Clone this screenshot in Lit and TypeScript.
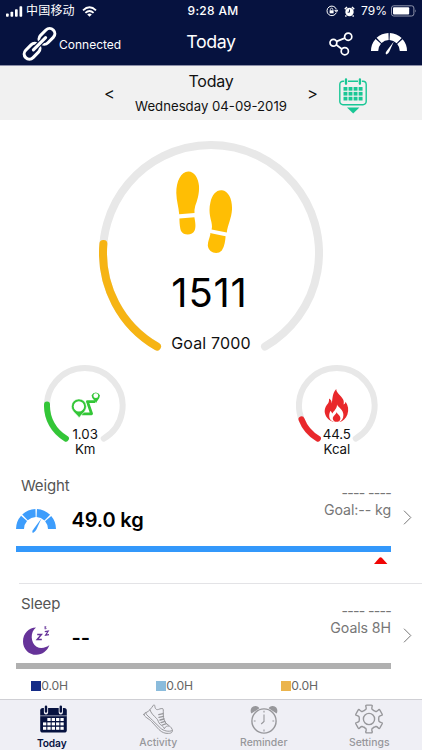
import { LitElement, html, css, svg } from "lit";
import { customElement, property } from "lit/decorators.js";

const polar = (c: number, r: number, deg: number) => {
  const a = (deg * Math.PI) / 180;
  return `${(c + r * Math.cos(a)).toFixed(2)} ${(c + r * Math.sin(a)).toFixed(2)}`;
};

const arc = (c: number, r: number, sweep: number) =>
  `M${polar(c, r, 120)}A${r} ${r} 0 ${sweep > 180 ? 1 : 0} 1 ${polar(c, r, 120 + sweep)}`;

@customElement("progress-ring")
class ProgressRing extends LitElement {
  @property({ type: Number }) size = 224;
  @property({ type: Number }) thickness = 8;
  @property({ type: Number }) sweep = 0;
  @property() color = "#f6b414";

  static styles = css`
    :host { display: grid; }
    svg, .content { grid-area: 1 / 1; }
    svg { display: block; }
    .content { display: flex; flex-direction: column; align-items: center; }
  `;

  render() {
    const c = this.size / 2;
    const r = c - this.thickness / 2;
    return html`
      <svg width=${this.size} height=${this.size} fill="none" stroke-linecap="round" stroke-width=${this.thickness}>
        <path d=${arc(c, r, 300)} stroke="#e8e8e8" />
        <path d=${arc(c, r, this.sweep)} stroke=${this.color} />
      </svg>
      <div class="content"><slot></slot></div>
    `;
  }
}

@customElement("gauge-icon")
class GaugeIcon extends LitElement {
  static styles = css`
    :host { display: block; }
    svg { display: block; width: 100%; height: 100%; }
  `;
  render() {
    return html`<svg viewBox="0 0 40 25" fill="none">
      <path d="M4 21a16 16 0 0 1 32 0" stroke="currentColor" stroke-width="8" stroke-dasharray="11.6 1.29" />
      <path d="M25.4 10.6L20.4 21.6Q19.6 23.6 17 25Q16 24.5 16.4 22.8Q17.2 21.6 18 20.4Z" fill="currentColor" />
    </svg>`;
  }
}

const cells = (cols: number, x0: number, y0: number, w: number, h: number, dx: number, dy: number, skip: number) =>
  [0, 1, 2].map((row) =>
    Array.from({ length: cols }, (_, i) => i)
      .slice(row === 0 ? skip : 0)
      .map((col) => svg`<rect x=${x0 + col * dx} y=${y0 + row * dy} width=${w} height=${h} />`)
  );

const gearPath = (() => {
  const at = (deg: number, r: number) => polar(15, r, deg);
  let d = `M${at(-90 - 14, 13)}`;
  for (let i = 0; i < 6; i++) {
    const b = i * 60 - 90;
    d += `Q${at(b - 14.5, 14.2)} ${at(b - 9, 14)}L${at(b + 9, 14)}Q${at(b + 14.5, 14.2)} ${at(b + 14, 13)}`;
    d += `Q${at(b + 13, 9.6)} ${at(b + 24, 9.9)}Q${at(b + 30, 9.3)} ${at(b + 36, 9.9)}Q${at(b + 47, 9.6)} ${at(b + 46, 13)}`;
  }
  return d + "Z";
})();

const tabs = [
  {
    label: "Today",
    cls: "today",
    icon: svg`
      <rect x="2.2" y="4" width="26.6" height="24.6" rx="2.6" fill="#06123f" />
      <path d="M8 3.4v5M22.8 3.4v5" stroke="#efeff5" stroke-width="4.2" stroke-linecap="round" />
      <path d="M8 2.6v5M22.8 2.6v5" stroke="#06123f" stroke-width="2.4" stroke-linecap="round" />
      <path d="M2.2 11.8h26.6" stroke="#efeff5" stroke-width=".6" />
      <g fill="#fff">${cells(5, 5, 14, 3.3, 3, 4.35, 4.4, 1)}</g>`,
  },
  {
    label: "Activity",
    cls: "activity",
    icon: svg`<g fill="none" stroke="#97979b" stroke-width="1" stroke-linejoin="round" stroke-linecap="round">
      <path d="M.9 10.4C1 9.4 1.8 9 3 8.6C6 7.6 8.4 4 10.4 1.2C11 .6 11.6.9 11.8 1.8C12 4.4 13 6.3 15.6 5.4C17.4 4.6 19 4.3 20 4.8C20.6 5.6 20.1 8.4 20.3 11C20.6 14.6 21 17.4 23.4 19.6C25.6 21.4 28.4 23 29.3 25.6C30 28.2 28.2 29.4 25.4 29.4C22.2 29.6 19 28.6 16 25.6L8.4 17.4C6 14.6 1.2 13.2 .9 10.4Z" />
      <path d="M2.6 8.9C3 11 6.4 13 9.6 16.4L17.6 24.2C20.4 26.8 25.6 28.2 29.2 26.6M7 5.8C7.8 9 10.6 11.6 13.4 14.2C15.4 16 15 18.4 17.2 20.4C18.6 21.6 20.4 22.4 21.4 24.4M21.4 24.4C22.6 22.4 24 21.8 25.6 22" />
      <path d="M15.8 10.6l4.3-.9M16 13.3l4.5-.9M17 16l4-1M18 18.6l4-1.2M19.4 21l4-1.4" stroke-width="1.3" />
    </g>`,
  },
  {
    label: "Reminder",
    cls: "",
    icon: svg`
      <path d="M2.4 9.6C.6 6.6 2 2.2 6.2 2.1C8.4 2 9.8 3.2 10.4 4.3ZM27.6 9.6C29.4 6.6 28 2.2 23.8 2.1C21.6 2 20.2 3.2 19.6 4.3Z" fill="#97979b" />
      <circle cx="15" cy="17" r="12.1" fill="#efeff5" stroke="#97979b" stroke-width="1.4" />
      <path d="M15 10.4V17.4L12.2 20M15 6.7v1.8M15 25.6v1.8M4.8 17h1.8M23.4 17h1.8" fill="none" stroke="#97979b" stroke-width="1.1" />`,
  },
  {
    label: "Settings",
    cls: "",
    icon: svg`<g fill="none" stroke="#97979b" stroke-width="1.4" stroke-linejoin="round">
      <path d=${gearPath} /><circle cx="15" cy="15" r="5.6" /></g>`,
  },
];

const chevron = html`<svg class="chevron" width="9" height="15" viewBox="0 0 9 15" fill="none" stroke="#777" stroke-width="1"><path d="M1 .7L7.8 7.5L1 14.3" /></svg>`;

@customElement("app-root")
class AppRoot extends LitElement {
  static styles = css`
    :host {
      display: flex; flex-direction: column; width: 422px; height: 750px; overflow: hidden;
      background: #fff; color: #111; white-space: nowrap;
      font-family: Inter, "Noto Sans CJK SC", sans-serif;
    }
    * { box-sizing: border-box; }
    svg { display: block; flex: none; }
    header { height: 66px; background: #06123f; color: #fff; border-bottom: 1px solid #8c8fa8; flex: none; }
    .status { height: 22px; display: grid; grid-template-columns: 1fr auto 1fr; align-items: center; font-size: 12px; line-height: 22px; }
    .left { display: flex; align-items: center; padding-left: 6px; }
    .carrier { margin: 0 7px 0 3px; font-size: 12px; letter-spacing: .2px; }
    .clock { font-weight: 500; letter-spacing: .3px; padding-left: 4px; }
    .right { display: flex; align-items: center; justify-content: flex-end; padding-right: 5px; }
    .percent { margin: 0 4px 0 6px; }
    .lock { margin-right: 6px; }
    .nav { height: 43px; display: grid; grid-template-columns: 1fr auto 1fr; align-items: center; }
    .device { display: flex; align-items: center; padding-left: 22px; }
    .device span { font-size: 12px; margin: 1px 0 0 2px; letter-spacing: 0; }
    .title { font-size: 17.8px; margin-top: -4px; letter-spacing: -.4px; }
    .actions { display: flex; justify-content: flex-end; align-items: center; padding-right: 15px; gap: 18.5px; }
    .actions gauge-icon { width: 36px; height: 22.5px; }
    .strip { height: 54px; flex: none; background: #f1f1f1; display: flex; align-items: center; padding-left: 104px; }
    .arrow { width: 11px; font-size: 16.5px; line-height: 20px; text-align: center; margin-top: 0; }
    .date { width: 192px; text-align: center; }
    .day { font-size: 16px; line-height: 26px; margin-top: -1px; letter-spacing: -.25px; }
    .full { font-size: 13.2px; line-height: 24px; letter-spacing: 0; }
    .strip svg { margin: 6px 0 0 20.8px; }
    .rings { height: 346px; flex: none; }
    .main { display: flex; justify-content: center; padding-top: 20.7px; height: 244px; }
    .feet { margin: 30px 14px 0 0; }
    .steps { font-size: 40px; line-height: 48px; margin-top: 14px; padding-right: 3px; letter-spacing: .8px; color: #000; }
    .goal { font-size: 16px; line-height: 20px; margin-top: 16px; letter-spacing: .15px; }
    .minor { display: flex; justify-content: space-between; padding: 0 44.4px; margin-top: .5px; height: 95px; }
    .value { font-size: 13.3px; line-height: 15.5px; text-align: center; color: #111; margin-top: 9px; }
    .route { margin-top: 26px; }
    .flame { margin-top: 24px; }
    .flame + .value { margin-top: 5px; letter-spacing: -.1px; }
    .metric { height: 115px; flex: none; padding: 10px 0 0 16px; }
    .metric.weight { height: 118px; border-bottom: 1px solid #e3e3e6; border-image: linear-gradient(90deg, transparent 20px, #e3e3e6 20px) 1; }
    .name { font-size: 15px; line-height: 20px; padding-left: 5px; color: #555; letter-spacing: -.15px; }
    .weight .name { padding-top: .4px; }
    .row { display: flex; height: 50px; }
    .weight .row { height: 49.6px; }
    .pic { width: 40px; margin-right: 15.5px; padding-top: 11.5px; }
    .pic gauge-icon { width: 40px; height: 25px; color: #3d9dfc; }
    .amount { width: 150px; font-size: 20px; font-weight: 600; line-height: 49px; color: #000; letter-spacing: -.15px; }
    .target { width: 169.5px; text-align: right; font-size: 14.2px; line-height: 17px; color: #777; margin-top: -20px; height: 50px; letter-spacing: -.1px; }
    .target div { height: 17px; }
    .target .none { margin-top: 8px; letter-spacing: -.75px; }
    .chevron { margin: 13.5px 0 0 11.5px; }
    .bar { width: 375px; height: 6px; background: #3398fb; }
    .sleep .row { height: 49px; }
    .sleep .bar { background: #b0b0b0; }
    .marker { margin: 5px 0 0 358px; }
    .legend { display: flex; padding: 7px 0 0 15px; font-size: 12.2px; line-height: 20px; color: #666; letter-spacing: -.15px; }
    .legend div { display: flex; align-items: center; width: 125px; }
    .swatch { width: 10px; height: 10px; margin-right: .3px; }
    .navy { background: #152c87; } .sky { background: #8bbcdc; } .gold { background: #ebb44d; }
    nav { flex: 1; background: #efeff5; border-top: 1px solid #cfcfd4; display: grid; grid-template-columns: repeat(4, 105.5px); }
    .tab { display: flex; flex-direction: column; align-items: center; padding-top: 4px; font-size: 10.4px; font-weight: 500; color: #97979b; line-height: 14px; letter-spacing: 0; }
    .tab span { margin-top: 2px; }
    .tab.today { color: #06123f; font-weight: 600; font-size: 10.2px; letter-spacing: -.1px; }
    .tab.today span { padding-right: 2px; }
  `;

  private header() {
    return html`<header>
      <div class="status">
        <div class="left">
          <svg width="17" height="11" viewBox="0 0 17 11" fill="#fff"><rect y="7.5" width="2.7" height="3.2" rx=".7" /><rect x="4.5" y="5.7" width="2.7" height="5" rx=".7" /><rect x="9" y="3.3" width="2.7" height="7.4" rx=".7" /><rect x="13.5" y=".3" width="2.7" height="10.4" rx=".7" /></svg>
          <span class="carrier">中国移动</span>
          <svg width="15" height="11" viewBox="0 0 15 11" fill="none" stroke="#fff" stroke-width="1.8"><path d="M1 4.4Q7.5-1.8 14 4.4M3.4 6.9Q7.5 3 11.6 6.9" /><path d="M7.5 10.8L5.2 8.5Q7.5 6.6 9.8 8.5Z" fill="#fff" stroke="none" /></svg>
        </div>
        <span class="clock">9:28 AM</span>
        <div class="right">
          <svg class="lock" width="12" height="12" viewBox="0 0 12 12" fill="none" stroke="#fff" stroke-width="1"><path d="M10.2 7.8A4.8 4.8 0 1 1 10.3 4.2M8.8 5.3h3L10.4 7.2Z" /><rect x="3.6" y="5.3" width="4" height="3" fill="#fff" stroke="none" /><path d="M4.4 5.4V4.4a1.2 1.2 0 0 1 2.4 0v1" stroke-width=".8" /></svg>
          <svg width="11" height="11" viewBox="0 0 11 11"><circle cx="5.5" cy="6" r="4.2" fill="#fff" /><path d="M.8 3.2L3 1M10.2 3.2L8 1M2.4 9.5l-1 1M8.6 9.5l1 1" stroke="#fff" stroke-width="1.5" /><path d="M5.5 3.5V6.2H3.7" fill="none" stroke="#06123f" stroke-width=".9" /></svg>
          <span class="percent">79%</span>
          <svg width="26" height="12" viewBox="0 0 26 12"><rect x=".5" y=".8" width="22.4" height="10.2" rx="2.2" fill="none" stroke="#9196ad" /><rect x="2" y="2.2" width="16.2" height="7.4" rx="1" fill="#fff" /><path d="M24.1 4.2Q25.6 5.9 24.1 7.6Z" fill="#9196ad" /></svg>
        </div>
      </div>
      <div class="nav">
        <div class="device">
          <svg width="35" height="36" viewBox="0 0 35 36" fill="none" stroke="#fff"><g transform="rotate(-45 17.5 17.8)" stroke-width="3.1"><rect x="-2" y="12.6" width="18" height="10.4" rx="5.2" /><rect x="19" y="12.6" width="18" height="10.4" rx="5.2" /></g><path d="M11.6 23.7L23.4 11.9" stroke="#06123f" stroke-width="5.4" stroke-linecap="round" /><path d="M11.4 23.9L23.6 11.7" stroke-width="3.1" stroke-linecap="round" /></svg>
          <span>Connected</span>
        </div>
        <div class="title">Today</div>
        <div class="actions">
          <svg width="24" height="24" viewBox="0 0 24 24" fill="none" stroke="#fff" stroke-width="1.7"><circle cx="4.4" cy="10.7" r="3.4" /><circle cx="19.2" cy="4.7" r="3.6" /><circle cx="15.8" cy="19.2" r="3.6" /><path d="M7.6 9.4L15.8 6.1M7.2 12.8L12.8 17" /></svg>
          <gauge-icon></gauge-icon>
        </div>
      </div>
    </header>`;
  }

  private strip() {
    return html`<div class="strip">
      <div class="arrow">&lt;</div>
      <div class="date"><div class="day">Today</div><div class="full">Wednesday 04-09-2019</div></div>
      <div class="arrow">&gt;</div>
      <svg width="28" height="36" viewBox="0 0 28 36" fill="none" stroke="#19c795"><path d="M5.2 3.2H4.2A3.2 3.2 0 0 0 .8 6.4V23.6A3.2 3.2 0 0 0 4 26.8H24A3.2 3.2 0 0 0 27.2 23.6V6.4A3.2 3.2 0 0 0 24 3.2H22.8M9 3.2H19" stroke-width="1.4" /><path d="M7 1.3V5.8M20.9 1.3V5.8" stroke-width="2.3" stroke-linecap="round" /><g fill="#19c795" stroke="none">${cells(4, 4.5, 9, 3.9, 3.7, 5.05, 4.9, 0)}<path d="M8 29.6H20.4L14.2 35.6Z" /></g></svg>
    </div>`;
  }

  private rings() {
    return html`<div class="rings">
      <div class="main">
        <progress-ring .size=${224} .thickness=${8} .sweep=${64.8} color="#f6b414">
          <svg class="feet" width="58" height="84" viewBox="0 0 58 84" fill="#ffbe04">
            <path d="M13.3 .4C19 .2 23.5 7 24 15C24.5 23 22 30 20.2 35Q19.2 39 19.5 42L4.2 43.2C3.8 36.5 1.4 30 1.3 22C1.2 10 6 .8 13.3 .4ZM4.4 47.4L19.4 46.3C20.2 51 21.2 56 19.6 59.6C17.6 64.6 8.6 65 6 60Q4.6 56.4 4.4 47.4Z" />
            <path d="M47 19.3C53.5 20 57.5 28.5 57 38.5C56.6 47 52.6 54 51.8 61.6L36.6 58.6C37.2 56 37 54 36.4 51C34.5 44 33.8 38.5 35.4 31.5C37 23.5 41.5 18.7 47 19.3ZM35.4 63Q34.8 61.8 36 62.2L50.6 65.2C50.2 69.5 49.8 75 46.8 79.4C42 84.6 33.2 81 32.8 74.4C32.8 70.5 34.6 67 35.4 63Z" />
          </svg>
          <div class="steps">1511</div>
          <div class="goal">Goal 7000</div>
        </progress-ring>
      </div>
      <div class="minor">
        <progress-ring .size=${81.6} .thickness=${6} .sweep=${62} color="#33c637">
          <svg class="route" width="30" height="27" viewBox="0 0 30 27" fill="none" stroke="#33c637"><path d="M25 10H18.6L22.6 21.6V24.4H12" stroke-width="0" /><path d="M25 10.6H17.4L21.6 22.8H12" stroke-width="2.8" stroke-linejoin="round" /><path d="M9.2 27C7.5 23.4 1.4 20.6 1.4 15.4A7.5 7.5 0 0 1 16.4 15.4C16.4 20.6 10.9 23.4 9.2 27Z" fill="#33c637" stroke="#fff" stroke-width=".6" /><circle cx="8.9" cy="15.4" r="5.2" fill="#fff" stroke="none" /><path d="M26 10.6C25.2 8.8 22.3 7.2 22.3 4.5A3.8 3.8 0 0 1 29.2 4.5C29.2 7.2 26.8 8.8 26 10.6Z" fill="#33c637" stroke-width="1.4" /><circle cx="25.8" cy="4.7" r="2.4" fill="#fff" stroke="none" /></svg>
          <div class="value">1.03<br />Km</div>
        </progress-ring>
        <progress-ring .size=${81.6} .thickness=${6} .sweep=${39} color="#e9282b">
          <svg class="flame" width="25" height="33" viewBox="0 0 25 33"><path d="M12.2 0C12.6 4 15.5 5.3 18 8.7C20 11 20 12.6 19.6 15.6C20.8 15 21.4 14 21.6 12.8C24.2 16.5 25 21 23.4 25.4C22 29.4 18.8 32.2 15.4 33H9.8C5.6 32 2 28.8 1 24.6C0 20 2 17 3.8 14.8C4.8 13.4 5.2 12 5 9.6C7 10.6 7.8 12.4 7.6 14.4C8.8 12 7.6 5 12.2 0Z" fill="#e9282b" /><path d="M13 15.4C13.8 18 19.6 20.4 19.4 26C19.4 29.6 17.6 32 15.2 33H9.8C7 32 5.2 29.8 5.2 27C5.2 24.6 5.8 23 6.6 21.8C7.4 22.8 7.8 23.8 8.4 24.6C9.6 21.6 13.2 19.8 13 15.4Z" fill="#fff" /><path d="M12.7 23C12.9 25 16.4 26.2 16.4 29.2C16.4 31.8 14.6 32.8 12.6 32.8C10.4 32.8 8.8 31.4 8.8 29.4C8.8 26.6 12 26 12.7 23Z" fill="#e9282b" /></svg>
          <div class="value">44.5<br />Kcal</div>
        </progress-ring>
      </div>
    </div>`;
  }

  render() {
    return html`
      ${this.header()}${this.strip()}${this.rings()}
      <section class="metric weight">
        <div class="name">Weight</div>
        <div class="row">
          <div class="pic"><gauge-icon></gauge-icon></div>
          <div class="amount">49.0 kg</div>
          <div class="target"><div class="none">---- ----</div><div>Goal:-- kg</div></div>
          ${chevron}
        </div>
        <div class="bar"></div>
        <svg class="marker" width="14" height="7" viewBox="0 0 14 7"><path d="M0 7L5.4 .8Q6.6-.2 7.8 .8L13.4 7Z" fill="#f00504" /></svg>
      </section>
      <section class="metric sleep">
        <div class="name">Sleep</div>
        <div class="row">
          <div class="pic"><svg width="40" height="30" viewBox="0 0 40 30"><path d="M20 1.6C14 6 14.4 17 20.6 20.8C25 23.4 30.6 21.4 33.4 19C31.6 24.6 26.2 28.8 20.4 28.8C12.8 28.8 7 23 7 15.4C7 7.6 13 1.6 20 1.6Z" fill="#663399" /><g fill="none" stroke="#663399"><path d="M21.2 8.5H25.4L21.2 13.6H25.8" stroke-width="1.5" /><path d="M28.8 5.6L32.2 5L29.6 9.2L33 8.6" stroke-width="1.2" /><path d="M28 1.2L30 .6L28.8 3L30.6 2.4" stroke-width=".8" /></g></svg></div>
          <div class="amount">--</div>
          <div class="target"><div class="none">---- ----</div><div>Goals 8H</div></div>
          ${chevron}
        </div>
        <div class="bar"></div>
        <div class="legend">${["navy", "sky", "gold"].map((c) => html`<div><i class="swatch ${c}"></i>0.0H</div>`)}</div>
      </section>
      <nav>
        ${tabs.map((t) => html`<div class="tab ${t.cls}"><svg width="30" height="30" viewBox="0 0 30 30">${t.icon}</svg><span>${t.label}</span></div>`)}
      </nav>
    `;
  }
}
